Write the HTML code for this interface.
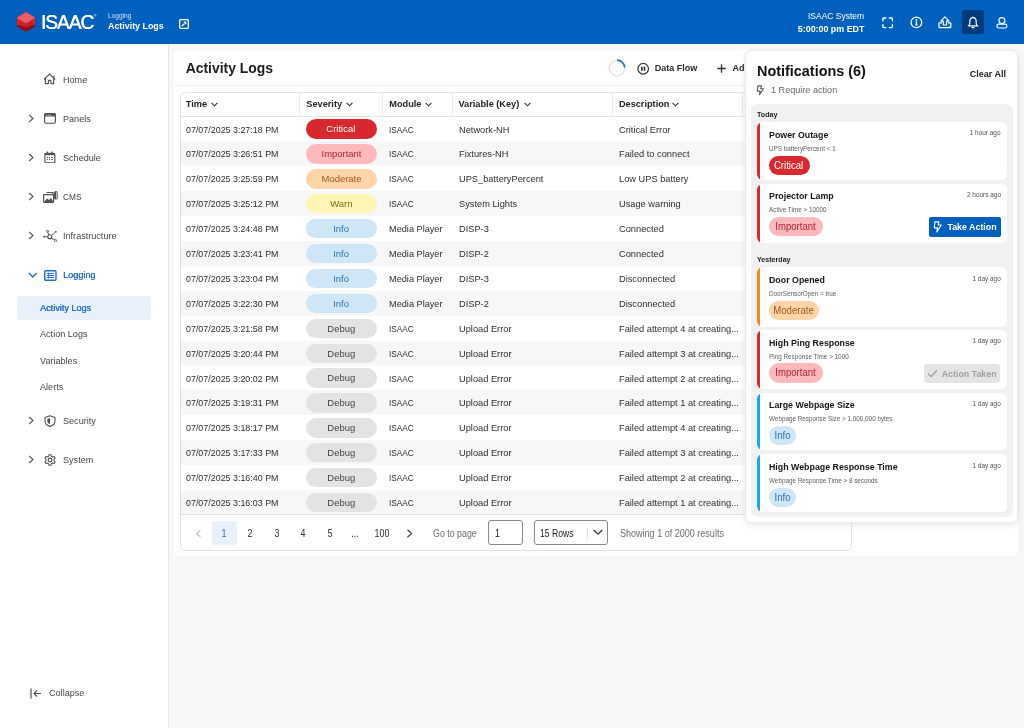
<!DOCTYPE html><html><head><meta charset="utf-8"><style>
html,body{margin:0;padding:0;width:1024px;height:728px;overflow:hidden;background:#F7F7F7;font-family:"Liberation Sans",sans-serif;}
.t{position:absolute;white-space:nowrap;}
.r{position:absolute;box-sizing:border-box;}
#wrap{position:absolute;left:0;top:0;width:1024px;height:728px;will-change:transform;}
</style></head><body><div id="wrap">
<div class="r" style="left:0px;top:0px;width:1024px;height:44px;background:#0060BE;"></div>
<svg class="r" style="left:16px;top:11px;" width="21" height="22" viewBox="0 0 21 22">
<path d="M10 1.4 L18.7 6.7 V15.4 L10 20.5 L1.3 15.4 V6.7 Z" fill="#8E1119" stroke="#8E1119" stroke-width="0.8" stroke-linejoin="round"/>
<path d="M1.3 6.7 L10 1.4 L18.7 6.7 V13.6 Q14 15.2 10 16.6 Q6 15.2 1.3 13.6 Z" fill="#C62029"/>
<path d="M1.3 7 V13.4 L3 14 V8 Z M18.7 7 V13.4 L17 14 V8 Z" fill="#E2262F"/>
<path d="M10 1.4 L18.7 6.7 L11.2 11.4 Q10 12.1 8.8 11.4 L1.3 6.7 Z" fill="#EC5D67" stroke="#EC5D67" stroke-width="0.8" stroke-linejoin="round"/>
</svg>
<div class="t" style="left:40.80px;top:12.56px;font-size:19.3px;line-height:19.3px;font-weight:400;color:#fff;letter-spacing:-1.1px;text-shadow:0.5px 0 0 #fff;">ISAAC</div>
<div class="t" style="left:93.50px;top:13.61px;font-size:4px;line-height:4px;font-weight:400;color:#fff;">&reg;</div>
<div class="t" style="left:108.30px;top:11.77px;font-size:7.0px;line-height:7.0px;font-weight:400;color:rgba(255,255,255,0.82);transform:scaleX(0.94);transform-origin:left center;">Logging</div>
<div class="t" style="left:108.00px;top:22.36px;font-size:8.9px;line-height:8.9px;font-weight:700;color:#fff;">Activity Logs</div>
<svg class="r" style="left:179px;top:19px;" width="10" height="10" viewBox="0 0 10 10"><rect x="0.65" y="0.65" width="8.7" height="8.7" rx="1" fill="none" stroke="#fff" stroke-width="1.3"/><path d="M2.9 7.1 L5.6 4.4" stroke="#fff" stroke-width="1.4"/><path d="M4.2 2.6 H7.4 V5.8 Z" fill="#fff"/></svg>
<div class="t" style="right:159.80px;top:11.75px;font-size:8.8px;line-height:8.8px;font-weight:400;color:#fff;transform:scaleX(0.966);transform-origin:right center;">ISAAC System</div>
<div class="t" style="right:159.60px;top:25.06px;font-size:8.9px;line-height:8.9px;font-weight:700;color:#fff;">5:00:00 pm EDT</div>
<svg class="r" style="left:881.5px;top:16.5px;" width="12" height="12" viewBox="0 0 12 12"><path d="M0.9 3.8 V2 Q0.9 1 1.9 1 H3.8 M7.4 1 H9.4 Q10.4 1 10.4 2 V3.8 M10.4 7.6 V9.6 Q10.4 10.6 9.4 10.6 H7.4 M3.8 10.6 H1.9 Q0.9 10.6 0.9 9.6 V7.6" fill="none" stroke="#fff" stroke-width="1.4" stroke-linecap="round"/></svg>
<svg class="r" style="left:909.5px;top:16px;" width="13" height="13" viewBox="0 0 13 13"><circle cx="6.4" cy="6.4" r="5.3" fill="none" stroke="#fff" stroke-width="1.25"/><circle cx="6.4" cy="3.9" r="0.95" fill="#fff"/><path d="M5.4 5.6 H7.1 V8.6 H7.6 V9.4 H5.3 V8.6 H5.8 V6.3 H5.4Z" fill="#fff"/></svg>
<svg class="r" style="left:937.5px;top:16px;" width="14" height="13" viewBox="0 0 14 13"><path d="M4 6.8 H1.8 Q1 6.8 1 7.6 V10.9 Q1 11.7 1.8 11.7 H12 Q12.8 11.7 12.8 10.9 V7.6 Q12.8 6.8 12 6.8 H9.8" fill="none" stroke="#fff" stroke-width="1.2"/><path d="M6.9 0.9 L2.8 5.1 H5.3 V9 H8.5 V5.1 H11 Z" fill="none" stroke="#fff" stroke-width="1.15" stroke-linejoin="round"/><circle cx="11" cy="9.9" r="0.5" fill="#fff"/></svg>
<div class="r" style="left:961.8px;top:9.8px;width:22.300000000000068px;height:24.3px;background:#003B7A;border-radius:2.5px;"></div>
<svg class="r" style="left:967px;top:16px;" width="12" height="13" viewBox="0 0 12 13"><path d="M6 1.6 C3.7 1.6 2.8 3.6 2.8 5.6 V7.6 C2.8 8.6 2 9.4 1.2 9.9 H10.8 C10 9.4 9.2 8.6 9.2 7.6 V5.6 C9.2 3.6 8.3 1.6 6 1.6Z" fill="none" stroke="#fff" stroke-width="1.15" stroke-linejoin="round"/><circle cx="6" cy="1.2" r="0.7" fill="#fff"/><path d="M5 11.6 H7" stroke="#fff" stroke-width="1.3" stroke-linecap="round"/></svg>
<svg class="r" style="left:995.5px;top:16px;" width="12" height="13" viewBox="0 0 12 13"><circle cx="5.9" cy="4.6" r="3" fill="none" stroke="#fff" stroke-width="1.15"/><rect x="0.9" y="8.1" width="10.1" height="3.9" rx="1.9" fill="none" stroke="#fff" stroke-width="1.15"/></svg>
<div class="r" style="left:0px;top:44px;width:169px;height:684px;background:#FFFFFF;border-right:1px solid #E6E6E6;"></div>
<div class="t" style="left:63.00px;top:74.72px;font-size:9.9px;line-height:9.9px;font-weight:400;color:#444444;transform:scaleX(0.92);transform-origin:left center;">Home</div>
<svg class="r" style="left:28px;top:114.0px;" width="6" height="9" viewBox="0 0 6 9"><path d="M1 0.8 L5 4.5 L1 8.2" fill="none" stroke="#505050" stroke-width="1.1"/></svg>
<div class="t" style="left:63.00px;top:113.72px;font-size:9.9px;line-height:9.9px;font-weight:400;color:#444444;transform:scaleX(0.92);transform-origin:left center;">Panels</div>
<svg class="r" style="left:28px;top:153.0px;" width="6" height="9" viewBox="0 0 6 9"><path d="M1 0.8 L5 4.5 L1 8.2" fill="none" stroke="#505050" stroke-width="1.1"/></svg>
<div class="t" style="left:63.00px;top:152.72px;font-size:9.9px;line-height:9.9px;font-weight:400;color:#444444;transform:scaleX(0.92);transform-origin:left center;">Schedule</div>
<svg class="r" style="left:28px;top:192.1px;" width="6" height="9" viewBox="0 0 6 9"><path d="M1 0.8 L5 4.5 L1 8.2" fill="none" stroke="#505050" stroke-width="1.1"/></svg>
<div class="t" style="left:63.00px;top:191.82px;font-size:9.9px;line-height:9.9px;font-weight:400;color:#444444;transform:scaleX(0.84);transform-origin:left center;">CMS</div>
<svg class="r" style="left:28px;top:231.1px;" width="6" height="9" viewBox="0 0 6 9"><path d="M1 0.8 L5 4.5 L1 8.2" fill="none" stroke="#505050" stroke-width="1.1"/></svg>
<div class="t" style="left:63.00px;top:230.82px;font-size:9.9px;line-height:9.9px;font-weight:400;color:#444444;transform:scaleX(0.92);transform-origin:left center;">Infrastructure</div>
<svg class="r" style="left:43px;top:73px;" width="13" height="12" viewBox="0 0 13 12"><path d="M0.9 6.3 L6.5 1.1 L12.2 6.3 M2.4 5.2 V10.6 H5.4 V7.9 Q5.4 7.3 6 7.3 H7.3 Q7.9 7.3 7.9 7.9 V10.6 H10.7 V5.2 M11 2.4 V4.4" fill="none" stroke="#505050" stroke-width="1.15" stroke-linejoin="round"/></svg>
<svg class="r" style="left:44px;top:113px;" width="12" height="11" viewBox="0 0 12 11"><rect x="0.6" y="0.6" width="10.8" height="9.6" rx="1.2" fill="none" stroke="#505050" stroke-width="1.15"/><rect x="0.6" y="0.6" width="10.8" height="3" rx="1" fill="#505050"/><circle cx="2.7" cy="2.2" r="0.6" fill="#ddd"/><circle cx="4.7" cy="2.2" r="0.6" fill="#ddd"/><circle cx="6.7" cy="2.2" r="0.6" fill="#ddd"/></svg>
<svg class="r" style="left:44px;top:151px;" width="12" height="12" viewBox="0 0 12 12"><rect x="0.9" y="2.2" width="9.9" height="9.6" rx="1.1" fill="none" stroke="#505050" stroke-width="1.15"/><rect x="0.9" y="2.2" width="9.9" height="2" fill="#505050"/><path d="M3.4 0.5 V2.6 M7.9 0.5 V2.6" stroke="#505050" stroke-width="1.2"/><circle cx="3.4" cy="6.5" r="0.65" fill="#505050"/><circle cx="5.5" cy="6.5" r="0.65" fill="#505050"/><path d="M7.2 6.5 H8.9" stroke="#505050" stroke-width="1"/><circle cx="3.4" cy="8.6" r="0.65" fill="#505050"/><circle cx="5.5" cy="8.6" r="0.65" fill="#505050"/><path d="M7.2 8.6 H8.9" stroke="#505050" stroke-width="1"/></svg>
<svg class="r" style="left:42.5px;top:190.5px;" width="15" height="12" viewBox="0 0 15 12"><rect x="0.6" y="3.6" width="10" height="7.8" rx="0.8" fill="none" stroke="#505050" stroke-width="1.2"/><path d="M1 11 L4 7.5 L6 9 L8 7 L10.5 11Z" fill="#505050"/><path d="M3.5 1.5 H10 V3 M12.5 0.6 V8" fill="none" stroke="#505050" stroke-width="1.2"/><rect x="11.6" y="0.6" width="2.6" height="7.4" rx="0.6" fill="none" stroke="#505050" stroke-width="1"/></svg>
<svg class="r" style="left:42.5px;top:230px;" width="15" height="12" viewBox="0 0 15 12"><circle cx="1.2" cy="6.8" r="1" fill="#505050"/><circle cx="6.8" cy="6.8" r="2" fill="none" stroke="#505050" stroke-width="1.1"/><circle cx="4.5" cy="1.3" r="1" fill="none" stroke="#505050" stroke-width="0.9"/><circle cx="12.8" cy="1.8" r="0.9" fill="#505050"/><circle cx="12.6" cy="10.6" r="1.1" fill="none" stroke="#505050" stroke-width="0.9"/><path d="M2.2 6.8H4.8 M5.8 5 L4.8 2.2 M8.5 5.8 L12 2.3 M8.3 8.2 L11.7 9.8" stroke="#505050" stroke-width="1"/></svg>
<svg class="r" style="left:28px;top:271.5px;" width="10" height="7" viewBox="0 0 10 7"><path d="M0.8 1 L4.8 5 L8.8 1" fill="none" stroke="#1F6FC5" stroke-width="1.3"/></svg>
<svg class="r" style="left:43.5px;top:269.5px;" width="13" height="11" viewBox="0 0 13 11"><rect x="0.7" y="0.7" width="11.3" height="9.6" rx="1.2" fill="none" stroke="#1F6FC5" stroke-width="1.4"/><path d="M2.6 3.5h7.6M2.6 5.5h7.6M2.6 7.5h7.6M4.6 2.6v6" stroke="#1F6FC5" stroke-width="0.9"/></svg>
<div class="t" style="left:63.00px;top:270.22px;font-size:9.9px;line-height:9.9px;font-weight:400;color:#1F6FC5;transform:scaleX(0.92);transform-origin:left center;text-shadow:0.35px 0 0 currentColor;">Logging</div>
<div class="r" style="left:17px;top:296px;width:134px;height:24px;background:#E8F0FA;border-radius:3px;"></div>
<div class="t" style="left:39.70px;top:303.42px;font-size:9.9px;line-height:9.9px;font-weight:400;color:#1F6FC5;transform:scaleX(0.92);transform-origin:left center;text-shadow:0.35px 0 0 currentColor;">Activity Logs</div>
<div class="t" style="left:39.70px;top:329.42px;font-size:9.9px;line-height:9.9px;font-weight:400;color:#444444;transform:scaleX(0.92);transform-origin:left center;">Action Logs</div>
<div class="t" style="left:39.70px;top:355.82px;font-size:9.9px;line-height:9.9px;font-weight:400;color:#444444;transform:scaleX(0.92);transform-origin:left center;">Variables</div>
<div class="t" style="left:39.70px;top:382.12px;font-size:9.9px;line-height:9.9px;font-weight:400;color:#444444;transform:scaleX(0.92);transform-origin:left center;">Alerts</div>
<svg class="r" style="left:28px;top:415.9px;" width="6" height="9" viewBox="0 0 6 9"><path d="M1 0.8 L5 4.5 L1 8.2" fill="none" stroke="#505050" stroke-width="1.1"/></svg>
<svg class="r" style="left:44px;top:414.5px;" width="12" height="12" viewBox="0 0 12 12"><path d="M6 0.8 L11 2.6 V6 C11 8.8 8.8 10.6 6 11.4 C3.2 10.6 1 8.8 1 6 V2.6 Z" fill="none" stroke="#505050" stroke-width="1.1" stroke-linejoin="round"/><path d="M6 3 L3.3 4 V6.2 C3.3 7.6 4.5 8.6 6 9.2Z" fill="#505050"/></svg>
<div class="t" style="left:63.00px;top:415.82px;font-size:9.9px;line-height:9.9px;font-weight:400;color:#444444;transform:scaleX(0.92);transform-origin:left center;">Security</div>
<svg class="r" style="left:28px;top:455.0px;" width="6" height="9" viewBox="0 0 6 9"><path d="M1 0.8 L5 4.5 L1 8.2" fill="none" stroke="#505050" stroke-width="1.1"/></svg>
<svg class="r" style="left:44px;top:453.5px;" width="12" height="12" viewBox="0 0 12 12"><circle cx="6" cy="6" r="1.9" fill="none" stroke="#505050" stroke-width="1.1"/><path d="M5 0.8 H7 L7.4 2.3 L8.6 3 L10.1 2.5 L11.1 4.2 L10 5.3 V6.7 L11.1 7.8 L10.1 9.5 L8.6 9 L7.4 9.7 L7 11.2 H5 L4.6 9.7 L3.4 9 L1.9 9.5 L0.9 7.8 L2 6.7 V5.3 L0.9 4.2 L1.9 2.5 L3.4 3 L4.6 2.3 Z" fill="none" stroke="#505050" stroke-width="1.05" stroke-linejoin="round"/></svg>
<div class="t" style="left:63.00px;top:455.02px;font-size:9.9px;line-height:9.9px;font-weight:400;color:#444444;transform:scaleX(0.92);transform-origin:left center;">System</div>
<svg class="r" style="left:30px;top:688px;" width="12" height="11" viewBox="0 0 12 11"><path d="M1 0.5 V10.5" stroke="#505050" stroke-width="1.2"/><path d="M11 5.5 H4 M7 2.5 L4 5.5 L7 8.5" fill="none" stroke="#505050" stroke-width="1.1"/></svg>
<div class="t" style="left:48.50px;top:688.32px;font-size:9.9px;line-height:9.9px;font-weight:400;color:#444444;transform:scaleX(0.92);transform-origin:left center;">Collapse</div>
<div class="r" style="left:174px;top:50px;width:844px;height:506px;background:#FFFFFF;border-radius:6px;"></div>
<div class="r" style="left:174px;top:85px;width:844px;height:1px;background:#EFEFEF;"></div>
<div class="t" style="left:185.70px;top:62.23px;font-size:13.9px;line-height:13.9px;font-weight:700;color:#1E1E1E;">Activity Logs</div>
<svg class="r" style="left:608px;top:58.8px;" width="18" height="18" viewBox="0 0 18 18"><circle cx="9" cy="9" r="7.8" fill="none" stroke="#E4E4E4" stroke-width="1.6"/><path d="M9 1.2 A7.8 7.8 0 0 1 16.8 8.6" fill="none" stroke="#1F6FC5" stroke-width="1.7"/></svg>
<svg class="r" style="left:636.5px;top:62.5px;" width="13" height="12" viewBox="0 0 13 12"><circle cx="6.2" cy="5.8" r="5.3" fill="none" stroke="#333" stroke-width="1.2"/><path d="M4.9 3.8V7.7M7.5 3.8V7.7" stroke="#222" stroke-width="1.5"/></svg>
<div class="t" style="left:654.70px;top:64.28px;font-size:9.0px;line-height:9.0px;font-weight:700;color:#2A2A2A;">Data Flow</div>
<svg class="r" style="left:716.5px;top:63.8px;" width="9" height="9" viewBox="0 0 9 9"><path d="M4.5 0.3V8.7M0.3 4.5H8.7" stroke="#333" stroke-width="1.3"/></svg>
<div class="t" style="left:732.50px;top:64.28px;font-size:9.0px;line-height:9.0px;font-weight:700;color:#2A2A2A;">Add</div>
<div class="r" style="left:180px;top:92px;width:672px;height:459px;background:#FFFFFF;border:1px solid #E3E3E3;border-radius:5px;"></div>
<div class="r" style="left:299px;top:93px;width:1px;height:23px;background:#EBEBEB;"></div>
<div class="r" style="left:382px;top:93px;width:1px;height:23px;background:#EBEBEB;"></div>
<div class="r" style="left:452px;top:93px;width:1px;height:23px;background:#EBEBEB;"></div>
<div class="r" style="left:612px;top:93px;width:1px;height:23px;background:#EBEBEB;"></div>
<div class="r" style="left:742px;top:93px;width:1px;height:23px;background:#EBEBEB;"></div>
<div class="r" style="left:181px;top:116px;width:670px;height:1px;background:#E3E3E3;"></div>
<div class="t" style="left:185.80px;top:99.61px;font-size:9.2px;line-height:9.2px;font-weight:700;color:#222;">Time</div>
<div class="t" style="left:306.30px;top:99.61px;font-size:9.2px;line-height:9.2px;font-weight:700;color:#222;">Severity</div>
<div class="t" style="left:389.30px;top:99.61px;font-size:9.2px;line-height:9.2px;font-weight:700;color:#222;">Module</div>
<div class="t" style="left:458.50px;top:99.61px;font-size:9.2px;line-height:9.2px;font-weight:700;color:#222;">Variable (Key)</div>
<div class="t" style="left:618.90px;top:99.61px;font-size:9.2px;line-height:9.2px;font-weight:700;color:#222;">Description</div>
<svg class="r" style="left:210.9px;top:101.5px;" width="7" height="5" viewBox="0 0 7 5"><path d="M0.6 0.8 L3.5 3.8 L6.4 0.8" fill="none" stroke="#333" stroke-width="1.1"/></svg>
<svg class="r" style="left:345.8px;top:101.5px;" width="7" height="5" viewBox="0 0 7 5"><path d="M0.6 0.8 L3.5 3.8 L6.4 0.8" fill="none" stroke="#333" stroke-width="1.1"/></svg>
<svg class="r" style="left:424.6px;top:101.5px;" width="7" height="5" viewBox="0 0 7 5"><path d="M0.6 0.8 L3.5 3.8 L6.4 0.8" fill="none" stroke="#333" stroke-width="1.1"/></svg>
<svg class="r" style="left:523.7px;top:101.5px;" width="7" height="5" viewBox="0 0 7 5"><path d="M0.6 0.8 L3.5 3.8 L6.4 0.8" fill="none" stroke="#333" stroke-width="1.1"/></svg>
<svg class="r" style="left:672px;top:101.5px;" width="7" height="5" viewBox="0 0 7 5"><path d="M0.6 0.8 L3.5 3.8 L6.4 0.8" fill="none" stroke="#333" stroke-width="1.1"/></svg>
<div class="t" style="left:185.80px;top:124.50px;font-size:9.8px;line-height:9.8px;font-weight:400;color:#2E2E2E;transform:scaleX(0.908);transform-origin:left center;">07/07/2025 3:27:18 PM</div>
<div class="r" style="left:305.6px;top:119.40px;width:71.4px;height:19.4px;border-radius:10px;background:#D7282F;color:#FFFFFF;font-size:9.7px;line-height:20.6px;text-align:center;"><span style="display:inline-block;transform:scaleX(0.975)">Critical</span></div>
<div class="t" style="left:389.30px;top:124.50px;font-size:9.8px;line-height:9.8px;font-weight:400;color:#2E2E2E;transform:scaleX(0.843);transform-origin:left center;">ISAAC</div>
<div class="t" style="left:458.50px;top:124.50px;font-size:9.8px;line-height:9.8px;font-weight:400;color:#2E2E2E;transform:scaleX(0.945);transform-origin:left center;">Network-NH</div>
<div class="t" style="left:618.90px;top:124.50px;font-size:9.8px;line-height:9.8px;font-weight:400;color:#2E2E2E;transform:scaleX(0.945);transform-origin:left center;">Critical Error</div>
<div class="r" style="left:181px;top:142px;width:670px;height:24px;background:#F7F7F7;"></div>
<div class="t" style="left:185.80px;top:149.40px;font-size:9.8px;line-height:9.8px;font-weight:400;color:#2E2E2E;transform:scaleX(0.908);transform-origin:left center;">07/07/2025 3:26:51 PM</div>
<div class="r" style="left:305.6px;top:144.30px;width:71.4px;height:19.4px;border-radius:10px;background:#FFB8BC;color:#B42339;font-size:9.7px;line-height:20.6px;text-align:center;"><span style="display:inline-block;transform:scaleX(0.975)">Important</span></div>
<div class="t" style="left:389.30px;top:149.40px;font-size:9.8px;line-height:9.8px;font-weight:400;color:#2E2E2E;transform:scaleX(0.843);transform-origin:left center;">ISAAC</div>
<div class="t" style="left:458.50px;top:149.40px;font-size:9.8px;line-height:9.8px;font-weight:400;color:#2E2E2E;transform:scaleX(0.945);transform-origin:left center;">Fixtures-NH</div>
<div class="t" style="left:618.90px;top:149.40px;font-size:9.8px;line-height:9.8px;font-weight:400;color:#2E2E2E;transform:scaleX(0.945);transform-origin:left center;">Failed to connect</div>
<div class="t" style="left:185.80px;top:174.30px;font-size:9.8px;line-height:9.8px;font-weight:400;color:#2E2E2E;transform:scaleX(0.908);transform-origin:left center;">07/07/2025 3:25:59 PM</div>
<div class="r" style="left:305.6px;top:169.20px;width:71.4px;height:19.4px;border-radius:10px;background:#FFD4A8;color:#A9541C;font-size:9.7px;line-height:20.6px;text-align:center;"><span style="display:inline-block;transform:scaleX(0.975)">Moderate</span></div>
<div class="t" style="left:389.30px;top:174.30px;font-size:9.8px;line-height:9.8px;font-weight:400;color:#2E2E2E;transform:scaleX(0.843);transform-origin:left center;">ISAAC</div>
<div class="t" style="left:458.50px;top:174.30px;font-size:9.8px;line-height:9.8px;font-weight:400;color:#2E2E2E;transform:scaleX(0.945);transform-origin:left center;">UPS_batteryPercent</div>
<div class="t" style="left:618.90px;top:174.30px;font-size:9.8px;line-height:9.8px;font-weight:400;color:#2E2E2E;transform:scaleX(0.945);transform-origin:left center;">Low UPS battery</div>
<div class="r" style="left:181px;top:191px;width:670px;height:25px;background:#F7F7F7;"></div>
<div class="t" style="left:185.80px;top:199.20px;font-size:9.8px;line-height:9.8px;font-weight:400;color:#2E2E2E;transform:scaleX(0.908);transform-origin:left center;">07/07/2025 3:25:12 PM</div>
<div class="r" style="left:305.6px;top:194.10px;width:71.4px;height:19.4px;border-radius:10px;background:#FFF6B5;color:#7D6A12;font-size:9.7px;line-height:20.6px;text-align:center;"><span style="display:inline-block;transform:scaleX(0.975)">Warn</span></div>
<div class="t" style="left:389.30px;top:199.20px;font-size:9.8px;line-height:9.8px;font-weight:400;color:#2E2E2E;transform:scaleX(0.843);transform-origin:left center;">ISAAC</div>
<div class="t" style="left:458.50px;top:199.20px;font-size:9.8px;line-height:9.8px;font-weight:400;color:#2E2E2E;transform:scaleX(0.945);transform-origin:left center;">System Lights</div>
<div class="t" style="left:618.90px;top:199.20px;font-size:9.8px;line-height:9.8px;font-weight:400;color:#2E2E2E;transform:scaleX(0.945);transform-origin:left center;">Usage warning</div>
<div class="t" style="left:185.80px;top:224.10px;font-size:9.8px;line-height:9.8px;font-weight:400;color:#2E2E2E;transform:scaleX(0.908);transform-origin:left center;">07/07/2025 3:24:48 PM</div>
<div class="r" style="left:305.6px;top:219.00px;width:71.4px;height:19.4px;border-radius:10px;background:#CFE6F6;color:#2A73B5;font-size:9.7px;line-height:20.6px;text-align:center;"><span style="display:inline-block;transform:scaleX(0.975)">Info</span></div>
<div class="t" style="left:389.30px;top:224.10px;font-size:9.8px;line-height:9.8px;font-weight:400;color:#2E2E2E;transform:scaleX(0.936);transform-origin:left center;">Media Player</div>
<div class="t" style="left:458.50px;top:224.10px;font-size:9.8px;line-height:9.8px;font-weight:400;color:#2E2E2E;transform:scaleX(0.945);transform-origin:left center;">DISP-3</div>
<div class="t" style="left:618.90px;top:224.10px;font-size:9.8px;line-height:9.8px;font-weight:400;color:#2E2E2E;transform:scaleX(0.945);transform-origin:left center;">Connected</div>
<div class="r" style="left:181px;top:241px;width:670px;height:25px;background:#F7F7F7;"></div>
<div class="t" style="left:185.80px;top:249.00px;font-size:9.8px;line-height:9.8px;font-weight:400;color:#2E2E2E;transform:scaleX(0.908);transform-origin:left center;">07/07/2025 3:23:41 PM</div>
<div class="r" style="left:305.6px;top:243.90px;width:71.4px;height:19.4px;border-radius:10px;background:#CFE6F6;color:#2A73B5;font-size:9.7px;line-height:20.6px;text-align:center;"><span style="display:inline-block;transform:scaleX(0.975)">Info</span></div>
<div class="t" style="left:389.30px;top:249.00px;font-size:9.8px;line-height:9.8px;font-weight:400;color:#2E2E2E;transform:scaleX(0.936);transform-origin:left center;">Media Player</div>
<div class="t" style="left:458.50px;top:249.00px;font-size:9.8px;line-height:9.8px;font-weight:400;color:#2E2E2E;transform:scaleX(0.945);transform-origin:left center;">DISP-2</div>
<div class="t" style="left:618.90px;top:249.00px;font-size:9.8px;line-height:9.8px;font-weight:400;color:#2E2E2E;transform:scaleX(0.945);transform-origin:left center;">Connected</div>
<div class="t" style="left:185.80px;top:273.90px;font-size:9.8px;line-height:9.8px;font-weight:400;color:#2E2E2E;transform:scaleX(0.908);transform-origin:left center;">07/07/2025 3:23:04 PM</div>
<div class="r" style="left:305.6px;top:268.80px;width:71.4px;height:19.4px;border-radius:10px;background:#CFE6F6;color:#2A73B5;font-size:9.7px;line-height:20.6px;text-align:center;"><span style="display:inline-block;transform:scaleX(0.975)">Info</span></div>
<div class="t" style="left:389.30px;top:273.90px;font-size:9.8px;line-height:9.8px;font-weight:400;color:#2E2E2E;transform:scaleX(0.936);transform-origin:left center;">Media Player</div>
<div class="t" style="left:458.50px;top:273.90px;font-size:9.8px;line-height:9.8px;font-weight:400;color:#2E2E2E;transform:scaleX(0.945);transform-origin:left center;">DISP-3</div>
<div class="t" style="left:618.90px;top:273.90px;font-size:9.8px;line-height:9.8px;font-weight:400;color:#2E2E2E;transform:scaleX(0.945);transform-origin:left center;">Disconnected</div>
<div class="r" style="left:181px;top:291px;width:670px;height:25px;background:#F7F7F7;"></div>
<div class="t" style="left:185.80px;top:298.80px;font-size:9.8px;line-height:9.8px;font-weight:400;color:#2E2E2E;transform:scaleX(0.908);transform-origin:left center;">07/07/2025 3:22:30 PM</div>
<div class="r" style="left:305.6px;top:293.70px;width:71.4px;height:19.4px;border-radius:10px;background:#CFE6F6;color:#2A73B5;font-size:9.7px;line-height:20.6px;text-align:center;"><span style="display:inline-block;transform:scaleX(0.975)">Info</span></div>
<div class="t" style="left:389.30px;top:298.80px;font-size:9.8px;line-height:9.8px;font-weight:400;color:#2E2E2E;transform:scaleX(0.936);transform-origin:left center;">Media Player</div>
<div class="t" style="left:458.50px;top:298.80px;font-size:9.8px;line-height:9.8px;font-weight:400;color:#2E2E2E;transform:scaleX(0.945);transform-origin:left center;">DISP-2</div>
<div class="t" style="left:618.90px;top:298.80px;font-size:9.8px;line-height:9.8px;font-weight:400;color:#2E2E2E;transform:scaleX(0.945);transform-origin:left center;">Disconnected</div>
<div class="t" style="left:185.80px;top:323.70px;font-size:9.8px;line-height:9.8px;font-weight:400;color:#2E2E2E;transform:scaleX(0.908);transform-origin:left center;">07/07/2025 3:21:58 PM</div>
<div class="r" style="left:305.6px;top:318.60px;width:71.4px;height:19.4px;border-radius:10px;background:#E3E3E3;color:#444444;font-size:9.7px;line-height:20.6px;text-align:center;"><span style="display:inline-block;transform:scaleX(0.975)">Debug</span></div>
<div class="t" style="left:389.30px;top:323.70px;font-size:9.8px;line-height:9.8px;font-weight:400;color:#2E2E2E;transform:scaleX(0.843);transform-origin:left center;">ISAAC</div>
<div class="t" style="left:458.50px;top:323.70px;font-size:9.8px;line-height:9.8px;font-weight:400;color:#2E2E2E;transform:scaleX(0.945);transform-origin:left center;">Upload Error</div>
<div class="t" style="left:618.90px;top:323.70px;font-size:9.8px;line-height:9.8px;font-weight:400;color:#2E2E2E;transform:scaleX(0.945);transform-origin:left center;">Failed attempt 4 at creating...</div>
<div class="r" style="left:181px;top:341px;width:670px;height:25px;background:#F7F7F7;"></div>
<div class="t" style="left:185.80px;top:348.60px;font-size:9.8px;line-height:9.8px;font-weight:400;color:#2E2E2E;transform:scaleX(0.908);transform-origin:left center;">07/07/2025 3:20:44 PM</div>
<div class="r" style="left:305.6px;top:343.50px;width:71.4px;height:19.4px;border-radius:10px;background:#E3E3E3;color:#444444;font-size:9.7px;line-height:20.6px;text-align:center;"><span style="display:inline-block;transform:scaleX(0.975)">Debug</span></div>
<div class="t" style="left:389.30px;top:348.60px;font-size:9.8px;line-height:9.8px;font-weight:400;color:#2E2E2E;transform:scaleX(0.843);transform-origin:left center;">ISAAC</div>
<div class="t" style="left:458.50px;top:348.60px;font-size:9.8px;line-height:9.8px;font-weight:400;color:#2E2E2E;transform:scaleX(0.945);transform-origin:left center;">Upload Error</div>
<div class="t" style="left:618.90px;top:348.60px;font-size:9.8px;line-height:9.8px;font-weight:400;color:#2E2E2E;transform:scaleX(0.945);transform-origin:left center;">Failed attempt 3 at creating...</div>
<div class="t" style="left:185.80px;top:373.50px;font-size:9.8px;line-height:9.8px;font-weight:400;color:#2E2E2E;transform:scaleX(0.908);transform-origin:left center;">07/07/2025 3:20:02 PM</div>
<div class="r" style="left:305.6px;top:368.40px;width:71.4px;height:19.4px;border-radius:10px;background:#E3E3E3;color:#444444;font-size:9.7px;line-height:20.6px;text-align:center;"><span style="display:inline-block;transform:scaleX(0.975)">Debug</span></div>
<div class="t" style="left:389.30px;top:373.50px;font-size:9.8px;line-height:9.8px;font-weight:400;color:#2E2E2E;transform:scaleX(0.843);transform-origin:left center;">ISAAC</div>
<div class="t" style="left:458.50px;top:373.50px;font-size:9.8px;line-height:9.8px;font-weight:400;color:#2E2E2E;transform:scaleX(0.945);transform-origin:left center;">Upload Error</div>
<div class="t" style="left:618.90px;top:373.50px;font-size:9.8px;line-height:9.8px;font-weight:400;color:#2E2E2E;transform:scaleX(0.945);transform-origin:left center;">Failed attempt 2 at creating...</div>
<div class="r" style="left:181px;top:390px;width:670px;height:25px;background:#F7F7F7;"></div>
<div class="t" style="left:185.80px;top:398.40px;font-size:9.8px;line-height:9.8px;font-weight:400;color:#2E2E2E;transform:scaleX(0.908);transform-origin:left center;">07/07/2025 3:19:31 PM</div>
<div class="r" style="left:305.6px;top:393.30px;width:71.4px;height:19.4px;border-radius:10px;background:#E3E3E3;color:#444444;font-size:9.7px;line-height:20.6px;text-align:center;"><span style="display:inline-block;transform:scaleX(0.975)">Debug</span></div>
<div class="t" style="left:389.30px;top:398.40px;font-size:9.8px;line-height:9.8px;font-weight:400;color:#2E2E2E;transform:scaleX(0.843);transform-origin:left center;">ISAAC</div>
<div class="t" style="left:458.50px;top:398.40px;font-size:9.8px;line-height:9.8px;font-weight:400;color:#2E2E2E;transform:scaleX(0.945);transform-origin:left center;">Upload Error</div>
<div class="t" style="left:618.90px;top:398.40px;font-size:9.8px;line-height:9.8px;font-weight:400;color:#2E2E2E;transform:scaleX(0.945);transform-origin:left center;">Failed attempt 1 at creating...</div>
<div class="t" style="left:185.80px;top:423.30px;font-size:9.8px;line-height:9.8px;font-weight:400;color:#2E2E2E;transform:scaleX(0.908);transform-origin:left center;">07/07/2025 3:18:17 PM</div>
<div class="r" style="left:305.6px;top:418.20px;width:71.4px;height:19.4px;border-radius:10px;background:#E3E3E3;color:#444444;font-size:9.7px;line-height:20.6px;text-align:center;"><span style="display:inline-block;transform:scaleX(0.975)">Debug</span></div>
<div class="t" style="left:389.30px;top:423.30px;font-size:9.8px;line-height:9.8px;font-weight:400;color:#2E2E2E;transform:scaleX(0.843);transform-origin:left center;">ISAAC</div>
<div class="t" style="left:458.50px;top:423.30px;font-size:9.8px;line-height:9.8px;font-weight:400;color:#2E2E2E;transform:scaleX(0.945);transform-origin:left center;">Upload Error</div>
<div class="t" style="left:618.90px;top:423.30px;font-size:9.8px;line-height:9.8px;font-weight:400;color:#2E2E2E;transform:scaleX(0.945);transform-origin:left center;">Failed attempt 4 at creating...</div>
<div class="r" style="left:181px;top:440px;width:670px;height:25px;background:#F7F7F7;"></div>
<div class="t" style="left:185.80px;top:448.20px;font-size:9.8px;line-height:9.8px;font-weight:400;color:#2E2E2E;transform:scaleX(0.908);transform-origin:left center;">07/07/2025 3:17:33 PM</div>
<div class="r" style="left:305.6px;top:443.10px;width:71.4px;height:19.4px;border-radius:10px;background:#E3E3E3;color:#444444;font-size:9.7px;line-height:20.6px;text-align:center;"><span style="display:inline-block;transform:scaleX(0.975)">Debug</span></div>
<div class="t" style="left:389.30px;top:448.20px;font-size:9.8px;line-height:9.8px;font-weight:400;color:#2E2E2E;transform:scaleX(0.843);transform-origin:left center;">ISAAC</div>
<div class="t" style="left:458.50px;top:448.20px;font-size:9.8px;line-height:9.8px;font-weight:400;color:#2E2E2E;transform:scaleX(0.945);transform-origin:left center;">Upload Error</div>
<div class="t" style="left:618.90px;top:448.20px;font-size:9.8px;line-height:9.8px;font-weight:400;color:#2E2E2E;transform:scaleX(0.945);transform-origin:left center;">Failed attempt 3 at creating...</div>
<div class="t" style="left:185.80px;top:473.10px;font-size:9.8px;line-height:9.8px;font-weight:400;color:#2E2E2E;transform:scaleX(0.908);transform-origin:left center;">07/07/2025 3:16:40 PM</div>
<div class="r" style="left:305.6px;top:468.00px;width:71.4px;height:19.4px;border-radius:10px;background:#E3E3E3;color:#444444;font-size:9.7px;line-height:20.6px;text-align:center;"><span style="display:inline-block;transform:scaleX(0.975)">Debug</span></div>
<div class="t" style="left:389.30px;top:473.10px;font-size:9.8px;line-height:9.8px;font-weight:400;color:#2E2E2E;transform:scaleX(0.843);transform-origin:left center;">ISAAC</div>
<div class="t" style="left:458.50px;top:473.10px;font-size:9.8px;line-height:9.8px;font-weight:400;color:#2E2E2E;transform:scaleX(0.945);transform-origin:left center;">Upload Error</div>
<div class="t" style="left:618.90px;top:473.10px;font-size:9.8px;line-height:9.8px;font-weight:400;color:#2E2E2E;transform:scaleX(0.945);transform-origin:left center;">Failed attempt 2 at creating...</div>
<div class="r" style="left:181px;top:490px;width:670px;height:25px;background:#F7F7F7;"></div>
<div class="t" style="left:185.80px;top:498.00px;font-size:9.8px;line-height:9.8px;font-weight:400;color:#2E2E2E;transform:scaleX(0.908);transform-origin:left center;">07/07/2025 3:16:03 PM</div>
<div class="r" style="left:305.6px;top:492.90px;width:71.4px;height:19.4px;border-radius:10px;background:#E3E3E3;color:#444444;font-size:9.7px;line-height:20.6px;text-align:center;"><span style="display:inline-block;transform:scaleX(0.975)">Debug</span></div>
<div class="t" style="left:389.30px;top:498.00px;font-size:9.8px;line-height:9.8px;font-weight:400;color:#2E2E2E;transform:scaleX(0.843);transform-origin:left center;">ISAAC</div>
<div class="t" style="left:458.50px;top:498.00px;font-size:9.8px;line-height:9.8px;font-weight:400;color:#2E2E2E;transform:scaleX(0.945);transform-origin:left center;">Upload Error</div>
<div class="t" style="left:618.90px;top:498.00px;font-size:9.8px;line-height:9.8px;font-weight:400;color:#2E2E2E;transform:scaleX(0.945);transform-origin:left center;">Failed attempt 1 at creating...</div>
<div class="r" style="left:181px;top:514px;width:670px;height:1px;background:#E3E3E3;"></div>
<div class="r" style="left:212px;top:520.5px;width:25px;height:24.5px;background:#E8F0FA;border-radius:2px;"></div>
<svg class="r" style="left:195px;top:528.5px;" width="7" height="9" viewBox="0 0 7 9"><path d="M5.5 0.8 L1.5 4.5 L5.5 8.2" fill="none" stroke="#BDBDBD" stroke-width="1.1"/></svg>
<div class="t" style="left:24.00px;width:400px;text-align:center;top:528.53px;font-size:10.0px;line-height:10.0px;font-weight:400;color:#1F6FC5;transform:scaleX(0.893);transform-origin:center center;">1</div>
<div class="t" style="left:50.30px;width:400px;text-align:center;top:528.53px;font-size:10.0px;line-height:10.0px;font-weight:400;color:#2E2E2E;transform:scaleX(0.893);transform-origin:center center;">2</div>
<div class="t" style="left:76.80px;width:400px;text-align:center;top:528.53px;font-size:10.0px;line-height:10.0px;font-weight:400;color:#2E2E2E;transform:scaleX(0.893);transform-origin:center center;">3</div>
<div class="t" style="left:103.00px;width:400px;text-align:center;top:528.53px;font-size:10.0px;line-height:10.0px;font-weight:400;color:#2E2E2E;transform:scaleX(0.893);transform-origin:center center;">4</div>
<div class="t" style="left:129.50px;width:400px;text-align:center;top:528.53px;font-size:10.0px;line-height:10.0px;font-weight:400;color:#2E2E2E;transform:scaleX(0.893);transform-origin:center center;">5</div>
<div class="t" style="left:155.30px;width:400px;text-align:center;top:528.53px;font-size:10.0px;line-height:10.0px;font-weight:400;color:#2E2E2E;transform:scaleX(0.893);transform-origin:center center;">...</div>
<div class="t" style="left:182.00px;width:400px;text-align:center;top:528.53px;font-size:10.0px;line-height:10.0px;font-weight:400;color:#2E2E2E;transform:scaleX(0.893);transform-origin:center center;">100</div>
<svg class="r" style="left:405.5px;top:528.5px;" width="7" height="9" viewBox="0 0 7 9"><path d="M1.5 0.8 L5.5 4.5 L1.5 8.2" fill="none" stroke="#444" stroke-width="1.2"/></svg>
<div class="t" style="left:432.50px;top:528.53px;font-size:10.0px;line-height:10.0px;font-weight:400;color:#707070;transform:scaleX(0.884);transform-origin:left center;">Go to page</div>
<div class="r" style="left:488px;top:520.3px;width:34.5px;height:25.0px;background:#fff;border:1px solid #8A8A8A;border-radius:3px;"></div>
<div class="t" style="left:495.00px;top:528.53px;font-size:10.0px;line-height:10.0px;font-weight:400;color:#222;transform:scaleX(0.893);transform-origin:left center;">1</div>
<div class="r" style="left:534px;top:520.3px;width:73.5px;height:25.0px;background:#fff;border:1px solid #8A8A8A;border-radius:3px;"></div>
<div class="r" style="left:586.5px;top:527px;width:1.0px;height:12px;background:#E0E0E0;"></div>
<div class="t" style="left:540.30px;top:528.53px;font-size:10.0px;line-height:10.0px;font-weight:400;color:#222;transform:scaleX(0.86);transform-origin:left center;">15 Rows</div>
<svg class="r" style="left:592.5px;top:529px;" width="10" height="7" viewBox="0 0 10 7"><path d="M0.8 1 L5 5.2 L9.2 1" fill="none" stroke="#333" stroke-width="1.3"/></svg>
<div class="t" style="left:620.00px;top:528.53px;font-size:10.0px;line-height:10.0px;font-weight:400;color:#707070;transform:scaleX(0.903);transform-origin:left center;">Showing 1 of 2000 results</div>
<div class="r" style="left:745px;top:50px;width:273px;height:473px;background:#FFFFFF;border-radius:6px;box-shadow:0 2px 6px rgba(0,0,0,0.10);border:1px solid #EBEBEB;"></div>
<div class="t" style="left:757.10px;top:63.91px;font-size:14.4px;line-height:14.4px;font-weight:700;color:#111;">Notifications (6)</div>
<div class="t" style="right:18.00px;top:69.88px;font-size:9.0px;line-height:9.0px;font-weight:700;color:#222;">Clear All</div>
<svg class="r" style="left:756px;top:84.5px;" width="9" height="11" viewBox="0 0 9 11"><path d="M1.9 0.9 H5.5 L4.7 3.7 H7.5 L3.5 9.8 L4.1 6.1 H1.3 Z" fill="none" stroke="#5A5A5A" stroke-width="1.1" stroke-linejoin="round"/></svg>
<div class="t" style="left:770.80px;top:85.53px;font-size:9.3px;line-height:9.3px;font-weight:400;color:#666;transform:scaleX(0.978);transform-origin:left center;">1 Require action</div>
<div class="r" style="left:751px;top:104px;width:262px;height:412.5px;background:#F1F1F1;border-radius:7px;"></div>
<div class="t" style="left:757.00px;top:110.83px;font-size:7.4px;line-height:7.4px;font-weight:700;color:#222;transform:scaleX(0.96);transform-origin:left center;">Today</div>
<div class="t" style="left:756.50px;top:255.63px;font-size:7.4px;line-height:7.4px;font-weight:700;color:#222;transform:scaleX(0.96);transform-origin:left center;">Yesterday</div>
<div class="r" style="left:756.5px;top:122.2px;width:250.5px;height:58.1px;background:#fff;border-radius:6px;overflow:hidden;"><div style="position:absolute;left:0;top:0;width:3px;height:100%;background:#D7282F;"></div></div>
<div class="t" style="left:768.50px;top:130.91px;font-size:9.2px;line-height:9.2px;font-weight:700;color:#141414;transform:scaleX(0.96);transform-origin:left center;">Power Outage</div>
<div class="t" style="left:768.50px;top:145.99px;font-size:7.1px;line-height:7.1px;font-weight:400;color:#5E5E5E;transform:scaleX(0.892);transform-origin:left center;">UPS batteryPercent &lt; 1</div>
<div class="r" style="left:768.5px;top:155.60px;height:19.2px;width:41.1px;border-radius:10px;background:#D7282F;color:#FFFFFF;font-size:10.2px;line-height:20.2px;white-space:nowrap;text-align:center;"><span style="display:inline-block;transform:scaleX(0.94)">Critical</span></div>
<div class="t" style="right:23.40px;top:129.47px;font-size:7.0px;line-height:7.0px;font-weight:400;color:#505050;transform:scaleX(0.92);transform-origin:right center;">1 hour ago</div>
<div class="r" style="left:756.5px;top:183.6px;width:250.5px;height:59.0px;background:#fff;border-radius:6px;overflow:hidden;"><div style="position:absolute;left:0;top:0;width:3px;height:100%;background:#D7282F;"></div></div>
<div class="t" style="left:768.50px;top:192.31px;font-size:9.2px;line-height:9.2px;font-weight:700;color:#141414;transform:scaleX(0.96);transform-origin:left center;">Projector Lamp</div>
<div class="t" style="left:768.50px;top:207.39px;font-size:7.1px;line-height:7.1px;font-weight:400;color:#5E5E5E;transform:scaleX(0.892);transform-origin:left center;">Active Time &gt; 10000</div>
<div class="r" style="left:768.5px;top:217.00px;height:19.2px;width:54.3px;border-radius:10px;background:#FFB8BC;color:#B42339;font-size:10.2px;line-height:20.2px;white-space:nowrap;text-align:center;"><span style="display:inline-block;transform:scaleX(0.94)">Important</span></div>
<div class="t" style="right:23.40px;top:190.87px;font-size:7.0px;line-height:7.0px;font-weight:400;color:#505050;transform:scaleX(0.92);transform-origin:right center;">2 hours ago</div>
<div class="r" style="left:929.2px;top:217.39999999999998px;width:71.5px;height:19.200000000000017px;background:#0060BE;border-radius:2px;"></div>
<svg class="r" style="left:932.8px;top:221.2px;" width="10" height="12" viewBox="0 0 10 12"><path d="M1.9 0.9 H6 L5.1 4 H8.3 L3.8 10.9 L4.5 6.8 H1.3 Z" fill="none" stroke="#fff" stroke-width="1.15" stroke-linejoin="round"/></svg>
<div class="t" style="right:27.40px;top:223.01px;font-size:8.85px;line-height:8.85px;font-weight:700;color:#fff;">Take Action</div>
<div class="r" style="left:756.5px;top:267.4px;width:250.5px;height:59.2px;background:#fff;border-radius:6px;overflow:hidden;"><div style="position:absolute;left:0;top:0;width:3px;height:100%;background:#F08A1E;"></div></div>
<div class="t" style="left:768.50px;top:276.11px;font-size:9.2px;line-height:9.2px;font-weight:700;color:#141414;transform:scaleX(0.96);transform-origin:left center;">Door Opened</div>
<div class="t" style="left:768.50px;top:291.19px;font-size:7.1px;line-height:7.1px;font-weight:400;color:#5E5E5E;transform:scaleX(0.892);transform-origin:left center;">DoorSensorOpen = true</div>
<div class="r" style="left:768.5px;top:300.80px;height:19.2px;width:50.8px;border-radius:10px;background:#FFD4A8;color:#A9541C;font-size:10.2px;line-height:20.2px;white-space:nowrap;text-align:center;"><span style="display:inline-block;transform:scaleX(0.94)">Moderate</span></div>
<div class="t" style="right:23.40px;top:274.67px;font-size:7.0px;line-height:7.0px;font-weight:400;color:#505050;transform:scaleX(0.92);transform-origin:right center;">1 day ago</div>
<div class="r" style="left:756.5px;top:330.0px;width:250.5px;height:58.8px;background:#fff;border-radius:6px;overflow:hidden;"><div style="position:absolute;left:0;top:0;width:3px;height:100%;background:#D7282F;"></div></div>
<div class="t" style="left:768.50px;top:338.71px;font-size:9.2px;line-height:9.2px;font-weight:700;color:#141414;transform:scaleX(0.96);transform-origin:left center;">High Ping Response</div>
<div class="t" style="left:768.50px;top:353.79px;font-size:7.1px;line-height:7.1px;font-weight:400;color:#5E5E5E;transform:scaleX(0.892);transform-origin:left center;">Ping Response Time &gt; 1000</div>
<div class="r" style="left:768.5px;top:363.40px;height:19.2px;width:54.3px;border-radius:10px;background:#FFB8BC;color:#B42339;font-size:10.2px;line-height:20.2px;white-space:nowrap;text-align:center;"><span style="display:inline-block;transform:scaleX(0.94)">Important</span></div>
<div class="t" style="right:23.40px;top:337.27px;font-size:7.0px;line-height:7.0px;font-weight:400;color:#505050;transform:scaleX(0.92);transform-origin:right center;">1 day ago</div>
<div class="r" style="left:924.2px;top:364.1px;width:75.89999999999998px;height:18.799999999999955px;background:#E4E4E4;border-radius:3px;"></div>
<svg class="r" style="left:926.5px;top:369.0px;" width="11" height="9" viewBox="0 0 11 9"><path d="M1 4.6 L4 7.6 L10 1.4" fill="none" stroke="#9A9A9A" stroke-width="1.3"/></svg>
<div class="t" style="right:27.40px;top:369.71px;font-size:8.85px;line-height:8.85px;font-weight:700;color:#A0A0A0;">Action Taken</div>
<div class="r" style="left:756.5px;top:392.7px;width:250.5px;height:56.9px;background:#fff;border-radius:6px;overflow:hidden;"><div style="position:absolute;left:0;top:0;width:3px;height:100%;background:#1AA3F0;"></div></div>
<div class="t" style="left:768.50px;top:401.41px;font-size:9.2px;line-height:9.2px;font-weight:700;color:#141414;transform:scaleX(0.96);transform-origin:left center;">Large Webpage Size</div>
<div class="t" style="left:768.50px;top:416.49px;font-size:7.1px;line-height:7.1px;font-weight:400;color:#5E5E5E;transform:scaleX(0.892);transform-origin:left center;">Webpage Response Size &gt; 1,000,000 bytes</div>
<div class="r" style="left:768.5px;top:426.10px;height:19.2px;width:27.5px;border-radius:10px;background:#CFE6F6;color:#2A73B5;font-size:10.2px;line-height:20.2px;white-space:nowrap;text-align:center;"><span style="display:inline-block;transform:scaleX(0.94)">Info</span></div>
<div class="t" style="right:23.40px;top:399.97px;font-size:7.0px;line-height:7.0px;font-weight:400;color:#505050;transform:scaleX(0.92);transform-origin:right center;">1 day ago</div>
<div class="r" style="left:756.5px;top:454.3px;width:250.5px;height:57.7px;background:#fff;border-radius:6px;overflow:hidden;"><div style="position:absolute;left:0;top:0;width:3px;height:100%;background:#1AA3F0;"></div></div>
<div class="t" style="left:768.50px;top:463.01px;font-size:9.2px;line-height:9.2px;font-weight:700;color:#141414;transform:scaleX(0.96);transform-origin:left center;">High Webpage Response Time</div>
<div class="t" style="left:768.50px;top:478.09px;font-size:7.1px;line-height:7.1px;font-weight:400;color:#5E5E5E;transform:scaleX(0.892);transform-origin:left center;">Webpage Response Time &gt; 8 seconds</div>
<div class="r" style="left:768.5px;top:487.70px;height:19.2px;width:27.5px;border-radius:10px;background:#CFE6F6;color:#2A73B5;font-size:10.2px;line-height:20.2px;white-space:nowrap;text-align:center;"><span style="display:inline-block;transform:scaleX(0.94)">Info</span></div>
<div class="t" style="right:23.40px;top:461.57px;font-size:7.0px;line-height:7.0px;font-weight:400;color:#505050;transform:scaleX(0.92);transform-origin:right center;">1 day ago</div>
</div></body></html>
